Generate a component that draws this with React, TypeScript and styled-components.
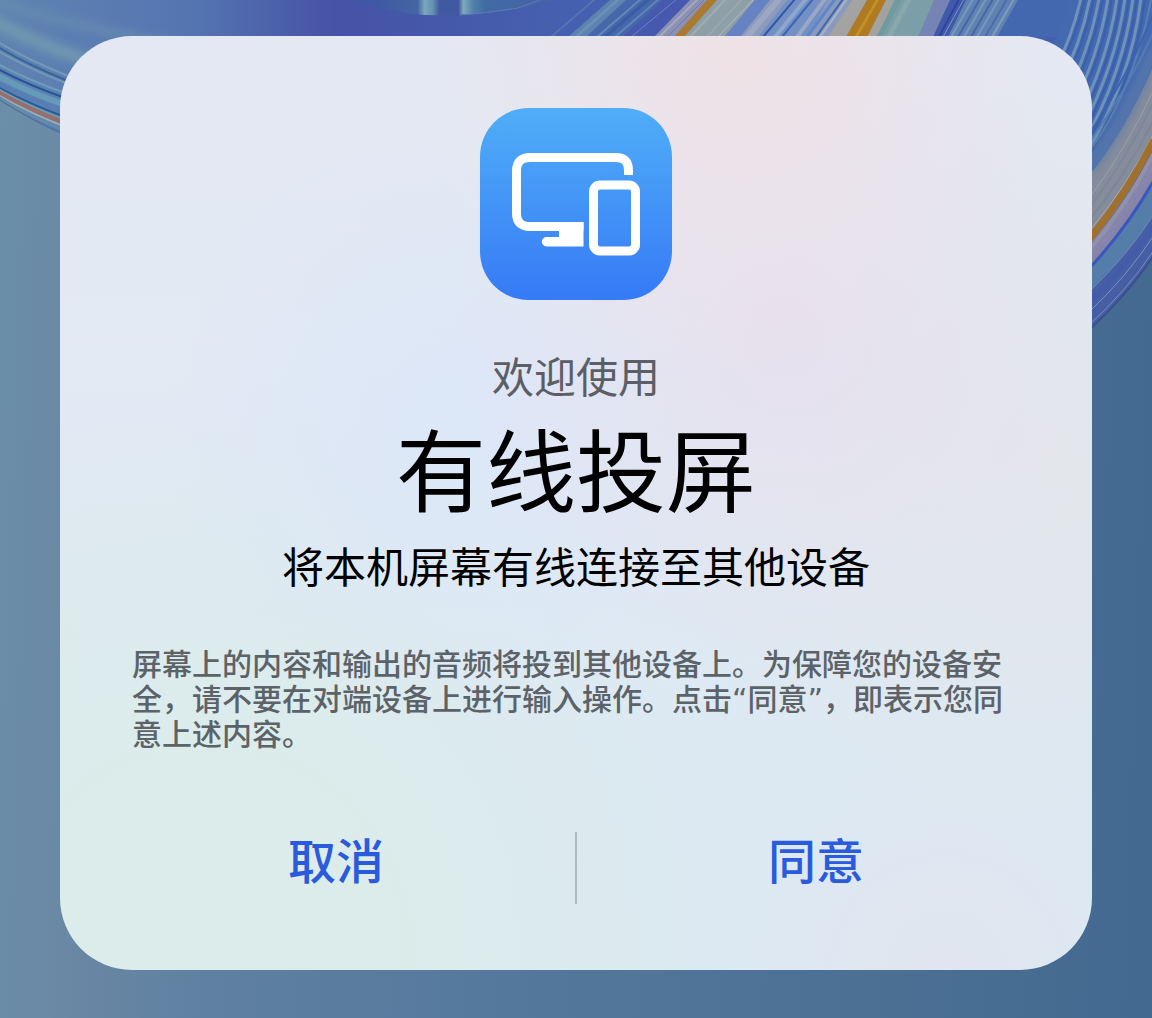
import React from 'react';
import styled, { createGlobalStyle } from 'styled-components';

const GlobalStyle = createGlobalStyle`
  *, *::before, *::after { box-sizing: border-box; }
  html, body { margin: 0; padding: 0; }
  body {
    background: #55779a;
    font-family: "DejaVu Sans", "Noto Sans CJK SC", sans-serif;
    color: #000;
  }
`;

const Screen = styled.main`
  position: relative;
  min-height: 100vh;
  display: flex;
  flex-direction: column;
  padding: 36px 60px 48px;
  overflow: hidden;
  background: linear-gradient(92deg, #6b8fa9 0%, #6a88a4 8%, #5f80a2 20%, #52779b 50%, #4a6f93 80%, #446991 100%);
`;

const Wallpaper = styled.svg`
  position: absolute;
  inset: 0;
  width: 100%;
  height: 100%;
`;

const Dialog = styled.section`
  position: relative;
  display: flex;
  flex-direction: column;
  align-items: center;
  padding: 72px 48px 66px;
  border-radius: 72px;
  background:
    radial-gradient(circle at 66% 2%, #efe2e6 0%, #efe2e600 28%),
    radial-gradient(circle at 70% 32%, #e6e0ee 0%, #e6e0ee00 34%),
    radial-gradient(circle at 39% 42%, #dce7f8 0%, #dce7f800 36%),
    radial-gradient(ellipse at 14% 98%, #dcecea 0%, #dcecea 14%, #dcecea00 42%),
    radial-gradient(circle at 86% 100%, #e0e5ef 0%, #e0e5ef00 18%),
    radial-gradient(circle at 95% 45%, #e3e6ea 0%, #e3e6ea00 36%),
    linear-gradient(180deg, #e4e8f3 0%, #e2eaf4 35%, #dce9f3 75%, #dce9f3 100%);
`;

const AppIcon = styled.svg`
  display: block;
  width: 192px;
  height: 192px;
`;

const Welcome = styled.p`
  margin: 49px 0 0;
  font-size: 42px;
  line-height: 60px;
  color: #5c5e66;
`;

const Title = styled.h1`
  margin: 0;
  font-size: 90px;
  font-weight: 400;
  line-height: 130px;
`;

const Summary = styled.p`
  margin: 0;
  font-size: 42px;
  line-height: 60px;
  text-align: center;
`;

const Notice = styled.p`
  align-self: stretch;
  margin: 48px 0 0;
  padding: 0 24px;
  font-size: 30px;
  font-weight: 500;
  line-height: 35px;
  color: #5c6368;
`;

const Actions = styled.div`
  align-self: stretch;
  display: flex;
  align-items: flex-start;
  gap: 11px;
  margin-top: 80px;
`;

const Action = styled.button`
  flex: 1;
  height: 60px;
  padding: 0;
  border: 0;
  background: none;
  font: inherit;
  font-size: 48px;
  font-weight: 500;
  line-height: 60px;
  color: #2a5bdc;
  cursor: pointer;
`;

const Divider = styled.span`
  width: 2px;
  height: 72px;
  background: #b0bcc2;
`;

type Band = [number, number, number, number, string];

/* x start/end at the top edge, x start/end 36px lower, colour */
const bands: Band[] = [
  [610, 626, 568, 586, '#5c84b0'],
  [626, 663, 586, 622, '#4568ab'],
  [663, 690, 622, 654, '#4659ae'],
  [690, 707, 654, 674, '#8a91b5'],
  [707, 717, 674, 684, '#aa7a30'],
  [717, 755, 684, 724, '#8f9fa8'],
  [755, 770, 724, 740, '#6583c2'],
  [770, 787, 740, 758, '#8c9bbd'],
  [787, 828, 758, 808, '#7390c4'],
  [828, 852, 808, 828, '#8a9abc'],
  [852, 867, 828, 846, '#a2a3a2'],
  [867, 886, 846, 867, '#ae7a22'],
  [886, 894, 867, 878, '#a0a3a0'],
  [894, 934, 878, 918, '#7b9ea8'],
  [934, 950, 918, 933, '#7584b4'],
  [950, 966, 933, 948, '#4059ab'],
  [966, 1018, 948, 997, '#5f82b2'],
  [1018, 1072, 997, 1058, '#4468b0'],
];

type Line = [number, number, string, number];

/* x at the top edge, x 36px lower, colour, width */
const topLines: Line[] = [
  [594, 552, '#5473b1', 2], [618, 577, '#6b8fb6', 3], [640, 598, '#6388b8', 2],
  [648, 606, '#3a5ca2', 3], [658, 616, '#5f84ba', 2], [676, 632, '#6585bb', 1],
  [697, 660, '#a5a8bd', 2], [704, 668, '#777aa8', 1], [725, 691, '#a0adb1', 2],
  [753, 719, '#b0bfc6', 1], [741, 708, '#98a7ae', 2], [778, 748, '#9ca7c2', 6],
  [794, 764, '#3458a8', 2], [805, 776, '#8ea7cf', 4], [812, 783, '#3a66b4', 2],
  [824, 798, '#9aa8c8', 4], [834, 808, '#5d86cc', 3], [842, 817, '#3f66ae', 2],
  [846, 821, '#a7b4c9', 2], [877, 857, '#c19124', 3], [898, 880, '#6f9b9e', 5],
  [908, 890, '#8aa8ab', 5], [958, 940, '#2f459c', 2], [963, 944, '#7c95b8', 1],
  [972, 952, '#7799ba', 2], [979, 959, '#4766a5', 2], [985, 965, '#7799bb', 2],
  [992, 972, '#4766a3', 2], [998, 978, '#7698bb', 2], [1006, 986, '#496dab', 2],
  [1013, 993, '#7c9dc0', 2],
];

/* Ribs curling behind the upper right corner: start x, end x, end y */
const ribs: [number, number, number][] = [
  [1081, 1052, 76], [1090, 1058, 88], [1099, 1064, 100], [1108, 1070, 112],
  [1117, 1076, 122], [1125, 1080, 132], [1133, 1084, 142], [1141, 1086, 154],
];

/* Lines leaving through the right edge: y at x=1152, y at x=1092, colour, width */
const sideLines: Line[] = [
  [16, 132, '#3c63ad', 2], [34, 140, '#567bb2', 2],
  [80, 186, '#80899f', 1], [92, 196, '#9aa0aa', 1], [104, 206, '#7c8898', 2],
  [122, 218, '#7c8797', 2], [136, 229, '#a6a9b0', 1], [143, 237, '#a0702c', 7],
  [156, 248, '#9191ac', 4], [166, 256, '#8585ad', 5], [183, 266, '#3b56be', 3],
  [217, 289, '#6c8bb8', 1], [228, 299, '#425baa', 4],
  [238, 309, '#7892c0', 1], [253, 322, '#7890bd', 1], [258, 327, '#38508c', 2],
];

/* Rim lines of the left side: y at x=0, y at x=60, colour, width */
const leftLines: Line[] = [
  [43, 73, '#739bb6', 2], [48, 78, '#37659a', 2],
  [52, 81, '#7199b8', 2], [65, 91, '#6f9cbb', 2], [70, 96, '#24539a', 2],
  [77, 103, '#659bb9', 6], [84, 110, '#577fb5', 4], [88, 115, '#285b98', 2],
  [90, 118, '#6d9cb5', 2], [93, 121, '#966f68', 4], [96, 125, '#9caab7', 2],
  [98, 129, '#6489a9', 3], [100, 133, '#456f94', 1],
];

function Backdrop() {
  return (
    <Wallpaper viewBox="0 0 1152 1018" preserveAspectRatio="xMidYMin slice" aria-hidden="true">
      <defs>
        <linearGradient id="shell" x1="0" y1="0" x2="560" y2="0" gradientUnits="userSpaceOnUse">
          <stop offset="0" stopColor="#5f83b0" />
          <stop offset="0.15" stopColor="#5b7db2" />
          <stop offset="0.35" stopColor="#5474b1" />
          <stop offset="0.6" stopColor="#4652a6" />
          <stop offset="1" stopColor="#4560ae" />
        </linearGradient>
        <linearGradient id="hollow" x1="370" y1="0" x2="540" y2="0" gradientUnits="userSpaceOnUse">
          <stop offset="0" stopColor="#3e58a3" />
          <stop offset="0.28" stopColor="#4465a4" />
          <stop offset="0.32" stopColor="#79a6bd" />
          <stop offset="0.37" stopColor="#6590b3" />
          <stop offset="0.41" stopColor="#4059a0" />
          <stop offset="0.52" stopColor="#4059a0" />
          <stop offset="0.55" stopColor="#7ea9be" />
          <stop offset="0.61" stopColor="#517fa9" />
          <stop offset="0.68" stopColor="#426ba4" />
          <stop offset="1" stopColor="#4763a7" />
        </linearGradient>
        <filter id="soft" x="-20%" y="-60%" width="140%" height="220%">
          <feGaussianBlur stdDeviation="5" />
        </filter>
      </defs>
      <path d="M0 0H1152V258Q1120 298 1088 332L600 200H200L60 134Q26 119 0 99Z" fill="url(#shell)" />
      <path d="M-20 12Q35 48 140 76" stroke="#7199b0" strokeWidth="12" fill="none" filter="url(#soft)" />
      <path d="M-20 -4Q50 22 180 46" stroke="#668cb0" strokeWidth="8" fill="none" filter="url(#soft)" />
      {leftLines.map(([a, b, color, width]) => (
        <path key={a} d={`M-2 ${a - 1}Q28 ${(a + b) / 2 + 2} 68 ${b + 3}`} stroke={color} strokeWidth={width} fill="none" />
      ))}
      <path d="M350 0H555Q528 6 510 10Q450 18 412 14Q375 8 350 0Z" fill="url(#hollow)" />
      <path d="M545 -2Q532 3 518 8Q480 14 460 15" stroke="#5b7cb5" strokeWidth="1" fill="none" />
      {bands.map(([a, b, c, d, color]) => (
        <polygon key={a} points={`${a},0 ${b + 1},0 ${d + 1},37 ${c},37`} fill={color} />
      ))}
      {topLines.map(([a, b, color, width]) => (
        <path key={a} d={`M${a + 1} -1L${b - 1} 37`} stroke={color} strokeWidth={width} />
      ))}
      <path d="M1070 0H1152V62Q1125 118 1088 168L1030 80L1058 36Z" fill="#4369b0" />
      {ribs.map(([x, endX, endY]) => (
        <g key={x} fill="none">
          <path d={`M${x} -2Q${x - 9} ${endY / 2} ${endX} ${endY}`} stroke="#7092b8" strokeWidth="3" />
          <path d={`M${x + 4} -2Q${x - 5} ${endY / 2} ${endX + 4} ${endY}`} stroke="#3a5fac" strokeWidth="2" />
        </g>
      ))}
      <path d="M1151 0Q1133 93 1088 153" stroke="#5a7fb2" strokeWidth="2" fill="none" />
      <path d="M1152 44Q1128 110 1088 158V183Q1126 130 1152 66Z" fill="#466fb0" />
      <path d="M1154 64Q1126 130 1088 177V246Q1130 197 1154 145Z" fill="#858c9c" />
      <path d="M1154 52Q1126 120 1088 169" stroke="#5977a9" strokeWidth="10" fill="none" filter="url(#soft)" />
      <path d="M1154 148Q1127 202 1088 246V270Q1126 230 1154 184Z" fill="#8685a8" />
      <path d="M1154 184Q1126 232 1088 270V292Q1128 255 1154 214Z" fill="#557daa" />
      <path d="M1154 214Q1128 255 1088 292V331Q1126 295 1154 256Z" fill="#465ea4" />
      {sideLines.map(([a, b, color, width]) => (
        <path key={a} d={`M1154 ${a - 3}Q1128 ${(a + b) / 2 + 2} 1088 ${b + 4}`} stroke={color} strokeWidth={width} fill="none" />
      ))}
    </Wallpaper>
  );
}

function CastIcon() {
  return (
    <AppIcon viewBox="0 0 192 192" aria-hidden="true">
      <defs>
        <linearGradient id="tile" x1="0" y1="0" x2="0" y2="1">
          <stop offset="0" stopColor="#50aef8" />
          <stop offset="1" stopColor="#367af6" />
        </linearGradient>
      </defs>
      <path
        d="M49 0H143C171 0 192 22 192 49V143C192 170 171 192 143 192H49C21 192 0 170 0 143V49C0 22 21 0 49 0Z"
        fill="url(#tile)"
      />
      <path
        d="M103.500 118.500H50Q36.500 118.500 36.500 105V63Q36.500 49.500 50 49.500H136Q148.500 49.500 148.500 62V67"
        fill="none"
        stroke="#fff"
        strokeWidth="9"
      />
      <path d="M79 114H103.500V138.500H66.500A4.700 4.700 0 0 1 66.500 129H79Z" fill="#fff" />
      <rect x="113.500" y="77" width="42" height="66" rx="6.500" fill="none" stroke="#fff" strokeWidth="9" />
    </AppIcon>
  );
}

export default function App() {
  return (
    <>
      <GlobalStyle />
      <Screen lang="zh-CN">
        <Backdrop />
        <Dialog role="dialog" aria-labelledby="dialog-title" aria-describedby="dialog-notice">
          <CastIcon />
          <Welcome>欢迎使用</Welcome>
          <Title id="dialog-title">有线投屏</Title>
          <Summary>将本机屏幕有线连接至其他设备</Summary>
          <Notice id="dialog-notice">
            屏幕上的内容和输出的音频将投到其他设备上。为保障您的设备安全，请不要在对端设备上进行输入操作。点击“同意”，即表示您同意上述内容。
          </Notice>
          <Actions>
            <Action type="button">取消</Action>
            <Divider />
            <Action type="button">同意</Action>
          </Actions>
        </Dialog>
      </Screen>
    </>
  );
}
